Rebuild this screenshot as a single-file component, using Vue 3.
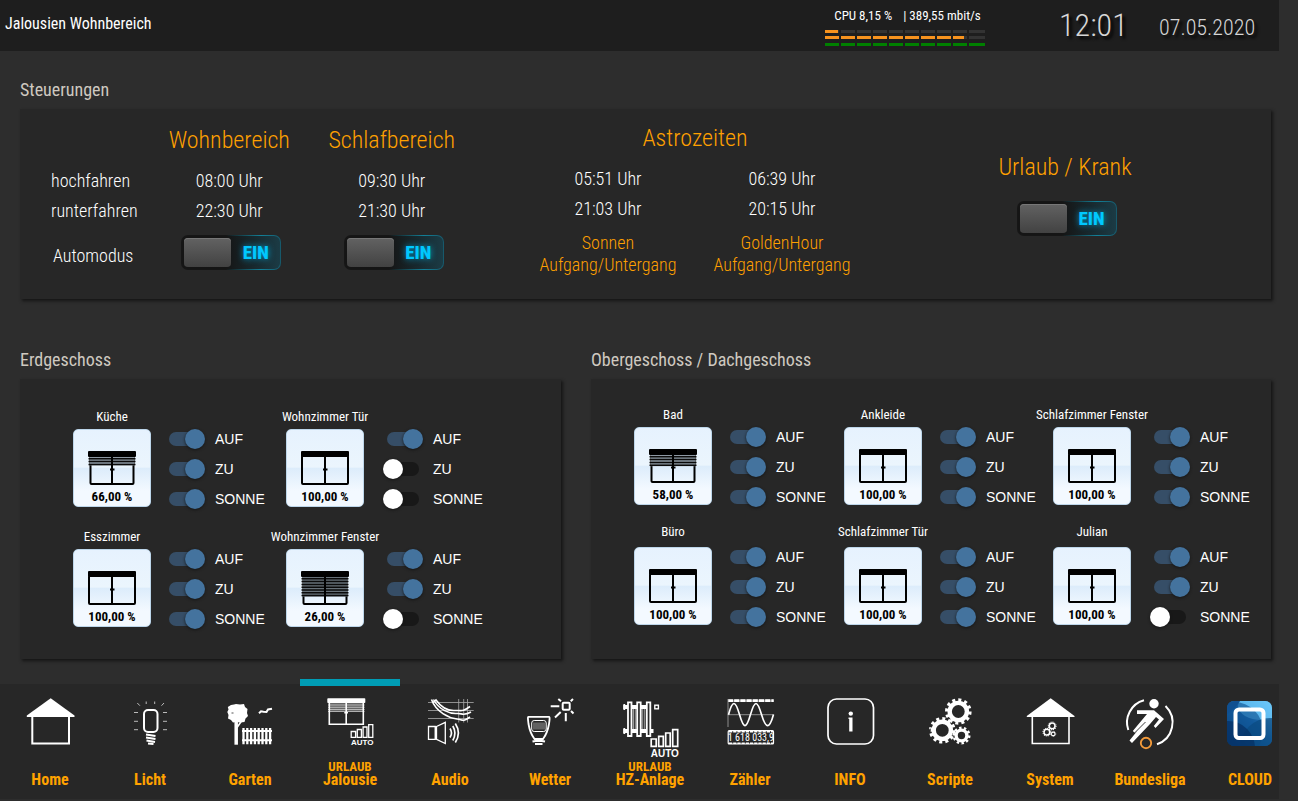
<script setup>
import { reactive } from 'vue'

const meters = [
  { name: 'CPU', value: 8.15, tone: 'warm' },
  { name: 'Netz', value: 87, tone: 'warm' },
  { name: 'Status', value: 100, tone: 'good' },
]

const auto = reactive({ wohn: true, schlaf: true, urlaub: true })

const astro = [
  { up: '05:51 Uhr', down: '21:03 Uhr', name: 'Sonnen' },
  { up: '06:39 Uhr', down: '20:15 Uhr', name: 'GoldenHour' },
]

const room = (name, percent, slats, auf = true, zu = true, sonne = true) => ({
  name,
  percent,
  slats,
  switches: [
    { label: 'AUF', on: auf },
    { label: 'ZU', on: zu },
    { label: 'SONNE', on: sonne },
  ],
})

const floors = reactive([
  {
    title: 'Erdgeschoss',
    kind: 'ground',
    rooms: [
      room('Küche', '66,00 %', 3),
      room('Wohnzimmer Tür', '100,00 %', 0, true, false, false),
      room('Esszimmer', '100,00 %', 0),
      room('Wohnzimmer Fenster', '26,00 %', 7, true, true, false),
    ],
  },
  {
    title: 'Obergeschoss / Dachgeschoss',
    kind: 'upper',
    rooms: [
      room('Bad', '58,00 %', 4),
      room('Ankleide', '100,00 %', 0),
      room('Schlafzimmer Fenster', '100,00 %', 0),
      room('Büro', '100,00 %', 0),
      room('Schlafzimmer Tür', '100,00 %', 0),
      room('Julian', '100,00 %', 0, true, true, false),
    ],
  },
])

const nav = [
  { id: 'home', label: 'Home' },
  { id: 'licht', label: 'Licht' },
  { id: 'garten', label: 'Garten' },
  { id: 'jalousie', label: 'Jalousie', note: 'URLAUB', active: true },
  { id: 'audio', label: 'Audio' },
  { id: 'wetter', label: 'Wetter' },
  { id: 'heizung', label: 'HZ-Anlage', note: 'URLAUB' },
  { id: 'zaehler', label: 'Zähler' },
  { id: 'info', label: 'INFO' },
  { id: 'scripte', label: 'Scripte' },
  { id: 'system', label: 'System' },
  { id: 'bundesliga', label: 'Bundesliga' },
  { id: 'cloud', label: 'CLOUD' },
]

const gears = [
  { x: 32.3, y: 13.5, ring: 8.6, ringW: 4.4, teeth: 11.6, teethW: 3.4, count: 24 },
  { x: 16.3, y: 32.3, ring: 8.6, ringW: 4.4, teeth: 11.6, teethW: 3.4, count: 24 },
  { x: 35.5, y: 37.5, ring: 5.4, ringW: 3.4, teeth: 7.7, teethW: 2.6, count: 20 },
]
</script>

<template>
  <div class="page">
    <header class="topbar">
      <h1 class="title">Jalousien Wohnbereich</h1>
      <div class="load">
        <p class="load-text"><span>CPU 8,15 %</span><span>| 389,55 mbit/s</span></p>
        <div
          v-for="m in meters"
          :key="m.name"
          class="meter"
          :class="m.tone"
          role="meter"
          :aria-label="m.name"
          :aria-valuenow="m.value"
          aria-valuemin="0"
          aria-valuemax="100"
        >
          <div class="fill" :style="{ width: m.value + '%' }"></div>
        </div>
      </div>
      <time class="clock">12:01</time>
      <time class="date" datetime="2020-05-07">07.05.2020</time>
    </header>

    <main class="content">
      <section>
        <h2 class="section-title">Steuerungen</h2>
        <div class="panel controls">
          <table class="schedule">
            <thead>
              <tr>
                <td class="label-col"></td>
                <th scope="col" class="accent">Wohnbereich</th>
                <th scope="col" class="accent">Schlafbereich</th>
              </tr>
            </thead>
            <tbody>
              <tr>
                <th scope="row">hochfahren</th>
                <td>08:00 Uhr</td>
                <td>09:30 Uhr</td>
              </tr>
              <tr>
                <th scope="row">runterfahren</th>
                <td>22:30 Uhr</td>
                <td>21:30 Uhr</td>
              </tr>
              <tr class="auto-row">
                <th scope="row">Automodus</th>
                <td>
                  <button class="power" type="button" role="switch" aria-label="Automodus Wohnbereich" :aria-checked="auto.wohn" @click="auto.wohn = !auto.wohn">
                    <span class="knob"></span><span class="power-text">EIN</span>
                  </button>
                </td>
                <td>
                  <button class="power" type="button" role="switch" aria-label="Automodus Schlafbereich" :aria-checked="auto.schlaf" @click="auto.schlaf = !auto.schlaf">
                    <span class="knob"></span><span class="power-text">EIN</span>
                  </button>
                </td>
              </tr>
            </tbody>
          </table>

          <div class="astro">
            <h3 class="accent">Astrozeiten</h3>
            <div class="astro-cols">
              <div v-for="a in astro" :key="a.name">
                <p>{{ a.up }}</p>
                <p>{{ a.down }}</p>
                <p class="astro-name">{{ a.name }}<br />Aufgang/Untergang</p>
              </div>
            </div>
          </div>

          <div class="holiday">
            <h3 class="accent">Urlaub / Krank</h3>
            <button class="power" type="button" role="switch" aria-label="Urlaub / Krank" :aria-checked="auto.urlaub" @click="auto.urlaub = !auto.urlaub">
              <span class="knob"></span><span class="power-text">EIN</span>
            </button>
          </div>
        </div>
      </section>

      <div class="floors">
        <section v-for="f in floors" :key="f.title" :class="f.kind">
          <h2 class="section-title">{{ f.title }}</h2>
          <div class="panel rooms">
            <article v-for="r in f.rooms" :key="r.name" class="room">
              <div class="blind">
                <h3 class="room-name">{{ r.name }}</h3>
                <button type="button" class="tile" :aria-label="r.name + ' ' + r.percent">
                  <svg class="window" viewBox="0 0 48 34" aria-hidden="true">
                    <rect x="0" y="0" width="48" height="6" rx="1" />
                    <rect :x="r.slats ? 2.5 : 1" y="5" :width="r.slats ? 43 : 46" height="28" rx="1" class="frame" />
                    <path d="M24 5V33" class="frame" />
                    <path d="M22 18.500H26.500" class="handle" />
                    <rect v-if="r.slats" x="2" y="6" width="44" :height="r.slats * 2.8" class="shade" :class="{ light: r.slats < 5 }" />
                    <path v-for="n in r.slats" :key="n" :d="`M0.500 ${5 + n * 2.800}H47.500`" class="slat" />
                    <path v-if="r.slats" d="M24 5V33" class="frame" />
                  </svg>
                  <span class="percent">{{ r.percent }}</span>
                </button>
              </div>
              <div class="switches">
                <label v-for="s in r.switches" :key="s.label" class="switch">
                  <input v-model="s.on" type="checkbox" />
                  <span>{{ s.label }}</span>
                </label>
              </div>
            </article>
          </div>
        </section>
      </div>
    </main>

    <nav class="nav">
      <a v-for="n in nav" :key="n.id" href="#" class="nav-item" :class="{ active: n.active }">
        <span class="icon-box">
          <svg v-if="n.id === 'home'" class="icon" viewBox="0 0 48 48">
            <path d="M24.700 0.200L48.500 17.500V19H0.800V17.500Z" class="solid" />
            <path d="M6.300 18V45.500H43V18" stroke-width="2" />
          </svg>

          <svg v-else-if="n.id === 'licht'" class="icon" viewBox="0 0 48 48">
            <rect x="18" y="12" width="13.500" height="22" rx="4" stroke-width="2" />
            <path d="M20 36.500L29.500 38M20 39.500L29.500 41M20.500 42.500L29 44M22 45.500L27.500 46" stroke-width="2" />
            <path d="M8 14.500H12M8 23.300H12M8 31.700H12M37 14.500H41M37 23.300H41M37 31.700H41M11.300 5L13.900 7.700M20.200 3.500V6M28.700 3.500V6M38 5L35.500 7.700" stroke-width="1" stroke="#bbb" />
          </svg>

          <svg v-else-if="n.id === 'garten'" class="icon" viewBox="0 0 48 48">
            <path d="M5 7L8 6.500L10 6L14 6.500L18 6L19 9L21.500 11L21 15L22 18L19.500 20.500L18.500 24L14 24.500L10 24L7 24.500L5 22L2 20.500L2.500 17L1.300 14L2.500 11.500L1.800 9Z" class="solid" />
            <path d="M10.200 23V46.700" stroke-width="3.500" />
            <path d="M15.500 23L11 29.500" stroke-width="1.600" />
            <path d="M5.500 15H7.500" stroke="#272727" stroke-width="0.800" />
            <path d="M16 33H46M16 42.300H46" stroke-width="2" />
            <path d="M17.500 30V46.300M21.300 30V46.300M25.100 30V46.300M28.900 30V46.300M32.700 30V46.300M36.500 30V46.300M40.300 30V46.300M44.100 30V46.300" stroke-width="2.300" />
            <path d="M33 15.200L35 13.300L37.500 13.700L40.500 14L42 11.500L46 10.700" stroke-width="2" />
          </svg>

          <svg v-else-if="n.id === 'jalousie'" class="icon" viewBox="0 0 48 48">
            <rect x="1.300" y="0.300" width="38" height="4.800" rx="0.800" class="solid" />
            <rect x="3" y="5" width="34" height="8.500" fill="#666" stroke="none" />
            <path d="M2 7H38.500M2 9.300H38.500M2 11.500H38.500M2 13.500H38.500" stroke="#ccc" stroke-width="0.800" />
            <path d="M3.300 5V26.300H37.300V5M20.200 5V26M18.300 14.700H22" stroke-width="1.600" />
            <path d="M25.200 33.500H29.600V39.300H25.200ZM31.300 31.500H35.400V39.300H31.300ZM37.100 29H41V39.300H37.100ZM42.700 26.700H46.800V39.300H42.700Z" stroke-width="1.300" />
            <text x="36.200" y="46.500" font-size="8">AUTO</text>
          </svg>

          <svg v-else-if="n.id === 'audio'" class="icon" viewBox="0 0 48 48">
            <path d="M2 4.500H47.700M2 12.500H47.700M2 20.500H47.700M32.700 1V24.500M37.700 1V24.500M41.500 1V24.500" stroke="#aaa" stroke-width="0.800" />
            <path d="M5.500 1.500C10 14 23 20 31 21C36 21 36 25 44 19" stroke-width="1.600" />
            <path d="M7.500 1.500C13 12 24 16 31 15.500C36 15 37 18.500 45 14" stroke-width="1.600" />
            <path d="M7 4.500L10 2C15 9 22 13 29 12.500C35 12 36 14.500 44 8.500" stroke-width="1.600" />
            <path d="M2.500 28.500H9.200V41.300H2.500ZM10.500 28.500L19.300 24.300V45.500L10.500 41.300Z" stroke-width="1.300" />
            <path d="M24 30.500Q27 35 24 39.500M26.800 28Q31 35 26.800 42.500M29.300 25.500Q35.500 35 29.300 44.500" stroke-width="1.700" />
          </svg>

          <svg v-else-if="n.id === 'wetter'" class="icon" viewBox="0 0 48 48">
            <path d="M2.500 18.800H23C24 18.800 23.600 22 23 26C22 32 20 37 17 41H8.500C5.500 37 3.500 32 2.500 26C2 22 1.500 18.800 2.500 18.800Z" stroke-width="1.800" />
            <path d="M12.800 41V44M6.500 43.500Q12.800 42 19 43.500M9 46H16.500" stroke-width="2" />
            <rect x="5.700" y="22.500" width="14.500" height="11" rx="2.500" stroke-width="1" />
            <path d="M8 24.500V31.500M10 24.500V31.500M12 24.500V31.500M14 24.500V31.500M16 24.500V31.500M18 24.500V31.500" stroke="#aaa" stroke-width="0.900" />
            <rect x="36.700" y="4.700" width="7" height="7" rx="1" stroke-width="2" />
            <path d="M24.700 8.300H33.300M29 19.500L34.700 14M39.800 15V23.300M45 13L47.500 15.500M32.300 1L35 3.300M44.700 3.200L47 1" stroke-width="2" />
          </svg>

          <svg v-else-if="n.id === 'heizung'" class="icon large" viewBox="0 0 60 60">
            <path d="M3.300 8.900H31M3.300 32.900H33.500" stroke-width="4" />
            <path d="M4.300 6V12M4.300 30V36" stroke-width="1.800" />
            <path d="M8 4.400H11.500V38H8ZM17.200 4.400H20.700V38H17.200ZM26.800 4.400H30.300V38H26.800Z" fill="#272727" stroke-width="1.800" />
            <path d="M13.500 11V31M15.300 11V31M22.700 11V31M24.700 11V31" stroke="#aaa" stroke-width="0.900" />
            <rect x="34.800" y="7.200" width="3.600" height="3.600" stroke-width="1.400" />
            <path d="M31.200 41H36.200V48.300H31.200ZM38.700 38.300H43.300V48.300H38.700ZM45.700 35H50.200V48.300H45.700ZM52.700 31.700H57.700V48.300H52.700Z" fill="#272727" stroke-width="1.700" />
            <text x="44.800" y="58.500" font-size="10">AUTO</text>
          </svg>

          <svg v-else-if="n.id === 'zaehler'" class="icon" viewBox="0 0 48 48">
            <path d="M2 2.700H47.700" stroke="#888" stroke-width="2.500" />
            <path d="M2 2.700H47.700" stroke-width="2.800" stroke-dasharray="5 1.200" />
            <path d="M2 1V29M2 16.700H47.700" stroke="#999" stroke-width="0.900" />
            <path d="M2.500 16.700C4.500 9 6 5.500 8 5.500C12.500 5.500 14.500 27.700 19 27.700C23.500 27.700 25.500 5.500 30 5.500C34.500 5.500 36.500 27.700 41.500 27.700C44 27.700 46 22 47.500 16.500" stroke-width="1.700" />
            <rect x="2.200" y="32.700" width="45.300" height="13.300" rx="1" stroke-width="1.200" />
            <path d="M3 33.600H47M3 45.200H47" stroke-width="1.600" stroke-dasharray="3.200 1" />
            <text x="24.900" y="43.100" font-size="10" class="digits">1 618 033,9</text>
          </svg>

          <svg v-else-if="n.id === 'info'" class="icon" viewBox="0 0 48 48">
            <rect x="2" y="1" width="45.500" height="45" rx="8.500" stroke-width="1.700" />
            <circle cx="24.800" cy="15.600" r="2.200" class="solid" />
            <path d="M22.500 19.500H26.500V33.500H23.200V21H22.500Z" class="solid" />
          </svg>

          <svg v-else-if="n.id === 'scripte' || n.id === 'system'" class="icon" viewBox="0 0 48 48">
            <template v-if="n.id === 'system'">
              <path d="M24.700 0.200L48.500 18V19H0.800V18Z" class="solid" />
              <path d="M6.300 18V45.500H43V18" stroke-width="1.600" />
            </template>
            <g :transform="n.id === 'system' ? 'translate(15.500 23.500) scale(0.330)' : undefined">
              <template v-for="g in gears" :key="g.x">
                <circle :cx="g.x" :cy="g.y" :r="g.ring" :stroke-width="g.ringW" />
                <circle :cx="g.x" :cy="g.y" :r="g.teeth" :stroke-width="g.teethW" :pathLength="g.count" stroke-dasharray="1 1" />
              </template>
            </g>
          </svg>

          <svg v-else-if="n.id === 'bundesliga'" class="icon" viewBox="0 0 48 48">
            <path d="M18 2.300A23 23 0 0 0 2.300 32M39.500 8A23 23 0 0 1 31 46.300" stroke-width="2" />
            <circle cx="28" cy="5.700" r="4.700" class="solid" />
            <path d="M11 12.200H28L38 21L29.500 30L27.800 28L33 21.500L30 19L24 26L6 45L3.500 42.500L12 32L9 35L6.800 33L21 16H11Z" class="solid" stroke-linejoin="round" />
            <path d="M19.500 24L8.500 35" stroke="#272727" stroke-width="0.900" />
            <circle cx="20" cy="45" r="5.200" stroke="#f39a3a" stroke-width="1.900" />
          </svg>

          <svg v-else class="icon" viewBox="0 0 48 48">
            <defs>
              <linearGradient id="sky" x1="0" y1="1" x2="1" y2="0">
                <stop offset="0" stop-color="#06356b" />
                <stop offset="0.550" stop-color="#1c6eb4" />
                <stop offset="1" stop-color="#7fd4ff" />
              </linearGradient>
              <clipPath id="badge"><rect x="1" y="3" width="45" height="45" rx="7" /></clipPath>
            </defs>
            <g clip-path="url(#badge)" stroke="none">
              <rect x="1" y="3" width="45" height="45" fill="url(#sky)" />
              <ellipse cx="36" cy="8" rx="24" ry="14" fill="#66c4f8" opacity="0.800" />
              <circle cx="8" cy="33" r="29" fill="#0b4c8c" opacity="0.600" />
              <circle cx="44" cy="50" r="30" fill="#0a4a80" opacity="0.700" />
              <circle cx="2" cy="50" r="27" fill="#032a5c" opacity="0.600" />
              <path d="M1 16Q8 12 14 3H1Z" fill="#0f4f90" />
            </g>
            <rect x="9.500" y="11.500" width="28" height="28.500" rx="3.500" stroke-width="4" />
          </svg>
        </span>
        <span class="note">{{ n.note }}</span>
        <span class="nav-label">{{ n.label }}</span>
      </a>
    </nav>
  </div>
</template>

<style>
body {
  margin: 0;
  background: #2d2d2d;
}
</style>

<style scoped>
.page {
  display: flex;
  flex-direction: column;
  min-height: 100vh;
  box-sizing: border-box;
  padding: 0 19px 2px 0;
  overflow: hidden;
  background: #2d2d2d;
  color: #fff;
  font-family: "Roboto Condensed", "Liberation Sans Narrow", Roboto, sans-serif;
}

h1, h2, h3, p {
  margin: 0;
  font-weight: 400;
}

.topbar {
  display: flex;
  align-items: center;
  height: 51px;
  background: #1e1e1e;
}

.title {
  flex: 1;
  padding: 0 0 4px 5px;
  font-size: 16px;
}

.load {
  width: 160px;
  margin-right: 75px;
  padding-top: 2px;
}

.load-text {
  display: flex;
  justify-content: center;
  gap: 11px;
  margin: 0 0 6px 5px;
  font-size: 13px;
  line-height: 16px;
  white-space: nowrap;
}

.meter {
  position: relative;
  height: 3px;
  background: #333;
}

.meter + .meter { margin-top: 3px; }
.meter.good { margin-top: 4px; }

.meter::after {
  content: "";
  position: absolute;
  inset: 0 2px 0 0;
  background: repeating-linear-gradient(to right, transparent 0 14px, #1e1e1e 14px 16px);
}

.fill { height: 100%; }
.warm .fill { background: #f7931e; }
.good .fill { background: #008000; }

.clock,
.date {
  color: #d6d6d6;
  font-weight: 300;
  text-shadow: 3px 3px 3px #000;
}

.clock {
  width: 100px;
  padding-bottom: 2px;
  margin-left: -1px;
  font-size: 32px;
}

.date {
  width: 120px;
  padding-top: 4px;
  font-size: 22px;
}

.content { padding: 25px 8px 0 20px; }

.section-title {
  height: 33px;
  color: #cfc9c0;
  font-size: 18px;
  line-height: 28px;
}

.panel {
  box-sizing: border-box;
  background: #272727;
  box-shadow: 2px 2px 3px #151515;
}

.controls {
  display: grid;
  grid-template-columns: 422fr 48fr 348fr 96fr 200fr 106fr;
  height: 190px;
  padding-left: 31px;
  font-size: 18px;
  font-weight: 300;
}

.accent {
  color: #ffa000;
  font-size: 24px;
  font-weight: 300;
}

.schedule {
  align-self: start;
  width: 100%;
  margin-top: 5px;
  border-collapse: collapse;
  table-layout: fixed;
  text-align: center;
}

.schedule th,
.schedule td {
  height: 30px;
  padding: 0;
  font-weight: 300;
}

.schedule thead th { height: 51px; }
.schedule .label-col { width: 23%; }
.schedule tbody th { text-align: left; }
.schedule .auto-row td { height: 54px; }
.schedule .auto-row th { padding: 6px 0 0 2px; }

.power {
  display: inline-flex;
  align-items: center;
  box-sizing: border-box;
  width: 100px;
  height: 35px;
  margin-left: 4px;
  padding: 0 0 0 2px;
  border: 1px solid transparent;
  border-radius: 7px;
  background:
    linear-gradient(to right, #151515 45%, #1b3b45) padding-box,
    linear-gradient(to right, #161616 45%, #128098 80%, #17586a) border-box;
  vertical-align: middle;
  cursor: pointer;
}

.knob {
  width: 47px;
  height: 29px;
  border-radius: 4px;
  background: linear-gradient(#626262, #424242);
  box-shadow: inset 0 1px #777;
}

.power-text {
  flex: 1;
  color: #00c8ff;
  font-family: "Roboto Condensed", "Open Sans", sans-serif;
  font-size: 19px;
  font-weight: 800;
  text-align: center;
  text-shadow: 0 0 6px #00a0d0;
}

.astro {
  grid-column: 3;
  padding-top: 3px;
  text-align: center;
}

.astro h3 { line-height: 52px; }

.astro-cols {
  display: grid;
  grid-template-columns: 1fr 1fr;
  line-height: 30px;
}

.astro-cols p { font-weight: 300; }

.astro-cols .astro-name {
  padding-top: 8px;
  color: #ffa000;
  line-height: 22px;
}

.holiday {
  grid-column: 5;
  padding-top: 43px;
  text-align: center;
}

.holiday h3 {
  margin-bottom: 19px;
  line-height: 30px;
}

.floors {
  display: grid;
  grid-template-columns: 541fr 680fr;
  gap: 30px;
  margin-top: 47px;
}

.rooms {
  display: grid;
  align-content: start;
  height: 280px;
}

.ground .rooms {
  grid-template-columns: 213fr 223fr;
  row-gap: 20px;
  padding: 28px 52px 0 53px;
}

.upper .rooms {
  grid-template-columns: 210fr 209fr 218fr;
  row-gap: 17px;
  padding: 26px 0 0 43px;
}

.room {
  display: flex;
  gap: 18px;
}

.ground .room:nth-child(2n),
.upper .room:nth-child(3n) { gap: 23px; }

.blind {
  display: flex;
  flex-direction: column;
  align-items: center;
  width: 78px;
}

.room-name {
  height: 22px;
  font-size: 13px;
  line-height: 20px;
  white-space: nowrap;
}

.upper .room:nth-child(n + 4) .room-name { margin-bottom: 3px; }

.tile {
  display: flex;
  flex-direction: column;
  align-items: center;
  justify-content: flex-end;
  box-sizing: border-box;
  width: 78px;
  height: 78px;
  padding: 0 0 1px;
  border: 1px solid #bdd6ea;
  border-radius: 5px;
  background: linear-gradient(#e6f2fe, #ebf5fd 49%, #dcecfb 50%, #f3f9ff 80%);
  color: #000;
  font-family: inherit;
  cursor: pointer;
}

.window {
  width: 48px;
  height: 34px;
  margin-bottom: 4px;
}

.frame {
  fill: none;
  stroke: #000;
  stroke-width: 2;
}

.handle {
  stroke: #000;
  stroke-width: 2;
}

.shade { fill: #667078; }
.shade.light { fill: #8d98a3; }

.slat {
  stroke: #0a0a0a;
  stroke-width: 1.500;
}

.percent {
  font-size: 13px;
  font-weight: 700;
  line-height: 16px;
}

.switches {
  display: flex;
  flex-direction: column;
  justify-content: flex-end;
  gap: 10px;
  margin-bottom: -2px;
}

.switch {
  display: flex;
  align-items: center;
  gap: 14px;
  height: 20px;
  font-family: "Liberation Sans", Arial, sans-serif;
  font-size: 14px;
}

.switch input {
  appearance: none;
  position: relative;
  width: 32px;
  height: 14px;
  margin: 0;
  border-radius: 7px;
  background: #181818;
}

.switch input::before {
  content: "";
  position: absolute;
  top: -3px;
  left: -4px;
  width: 20px;
  height: 20px;
  border-radius: 50%;
  background: #fff;
  box-shadow: 0 1px 3px #161616;
}

.switch input:checked { background: #364e67; }

.switch input:checked::before {
  left: 16px;
  background: #44739e;
}

.nav {
  display: flex;
  height: 115px;
  margin-top: auto;
  background: #272727;
}

.nav-item {
  position: relative;
  display: flex;
  flex: 0 0 100px;
  flex-direction: column;
  align-items: center;
  box-sizing: border-box;
  padding-top: 14px;
  color: #ffa200;
  font-weight: 700;
  text-decoration: none;
}

.nav-item.active::before {
  content: "";
  position: absolute;
  top: -5px;
  left: 0;
  width: 100%;
  height: 7px;
  background: #009db5;
}

.icon-box { height: 62px; }

.icon {
  display: block;
  width: 48px;
  height: 48px;
  overflow: visible;
  fill: none;
  stroke: #fff;
}

.icon.large {
  width: 60px;
  height: 60px;
}

.icon .solid {
  fill: #fff;
  stroke: none;
}

.icon text {
  fill: #fff;
  stroke: none;
  font-family: "Liberation Sans", Arial, sans-serif;
  font-weight: 700;
  text-anchor: middle;
}

.icon .digits {
  font-family: "Roboto Condensed", "Liberation Sans Narrow", sans-serif;
  font-weight: 400;
}

.note {
  height: 13px;
  font-size: 13px;
  line-height: 13px;
}

.nav-label {
  font-size: 16px;
  line-height: 14px;
}
</style>
